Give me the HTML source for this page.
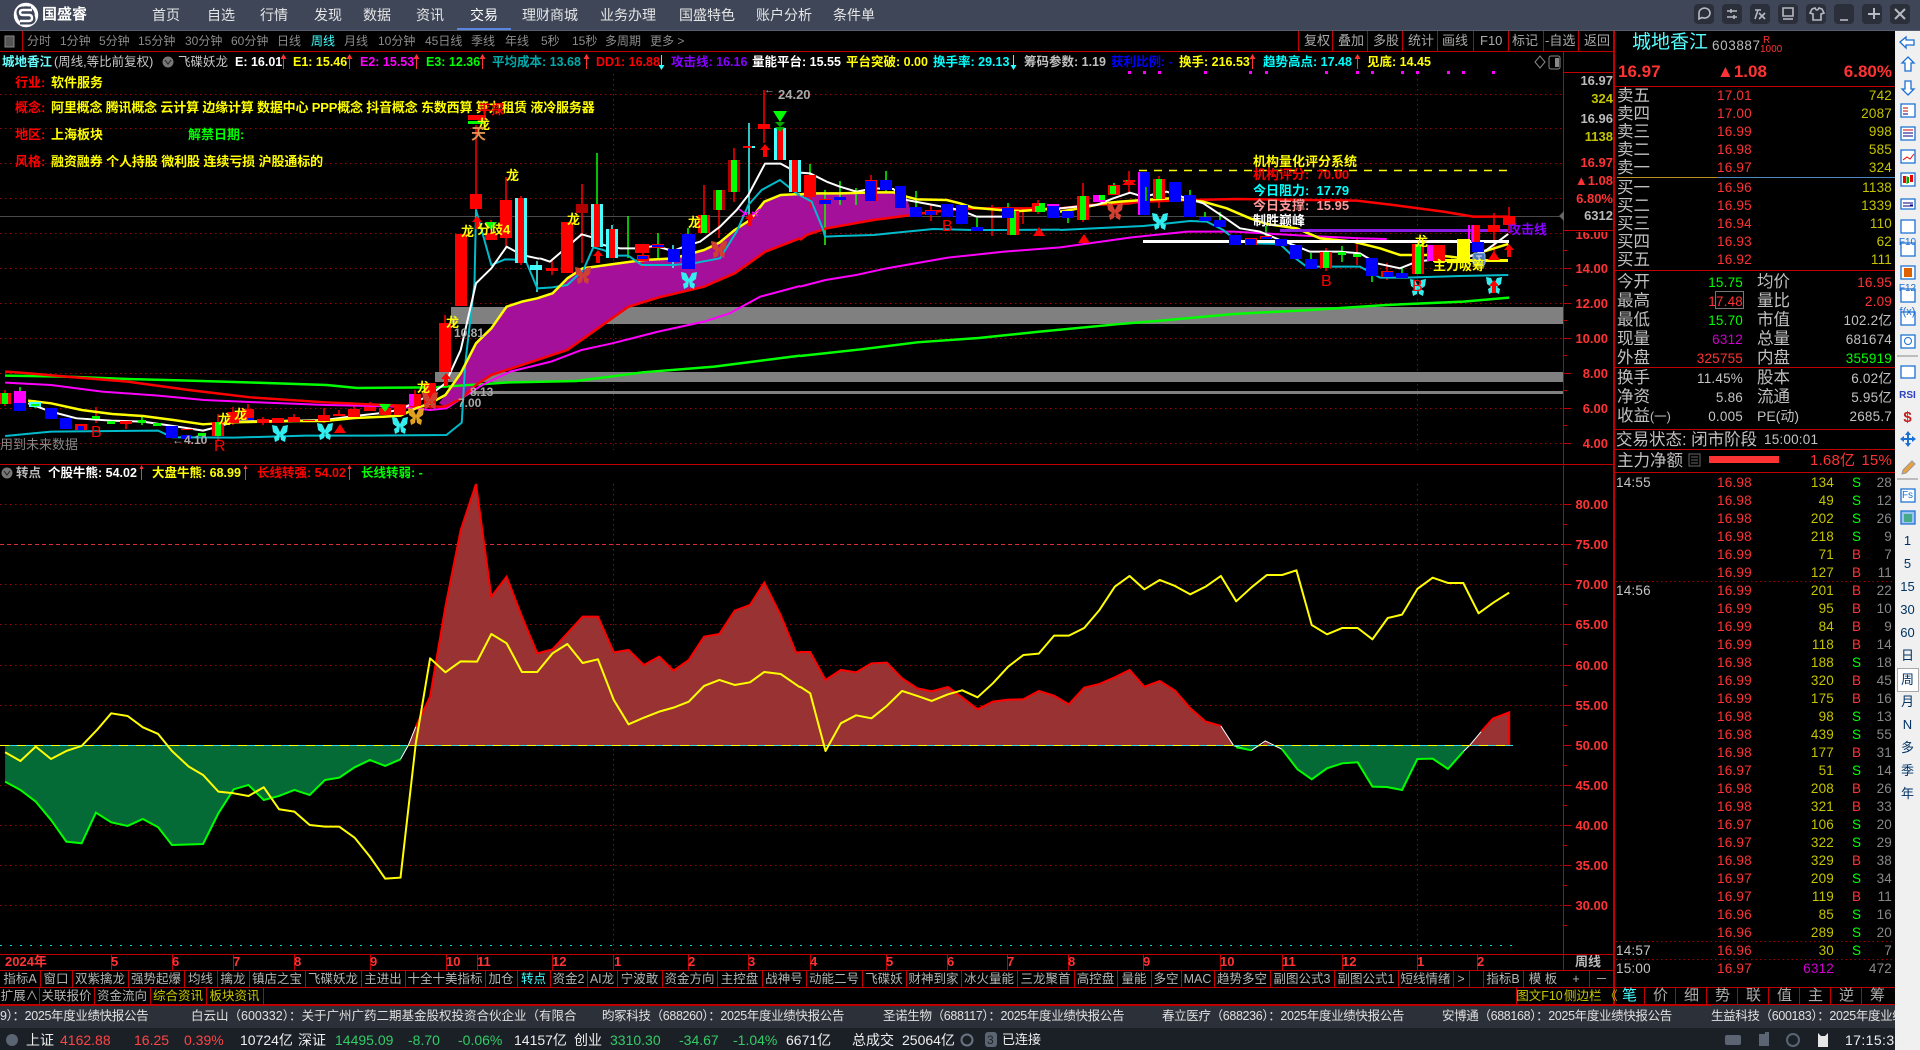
<!DOCTYPE html>
<html lang="zh"><head><meta charset="utf-8"><title>国盛睿</title>
<style>
html,body{margin:0;padding:0;background:#000;width:1920px;height:1050px;overflow:hidden}
body{position:relative;font-family:"Liberation Sans","Noto Sans CJK SC",sans-serif;font-size:13px;color:#bbb}
span{position:absolute;white-space:nowrap;line-height:20px}
svg{position:absolute;left:0;top:0}
svg *{vector-effect:non-scaling-stroke}
.bar{position:absolute;left:0;width:100%}
.b{font-weight:bold}
.nav{font-size:14px;color:#e6e6e6;top:5px}
.tb{font-size:12px;color:#8c8c8c;top:31px}
.tr{font-size:13px;color:#aaa;top:31px;text-align:center}
.in{top:52px;font-size:12.5px;font-weight:bold}
.n{top:0}
.ax{right:312px;font-size:13px;font-weight:bold;color:#f33;margin-top:1px}
.ar{right:307px;font-size:13px;font-weight:bold}
.dt{top:952px;font-size:13px;font-weight:bold;color:#f33}
.bt{top:969px;font-size:12.5px;color:#b4b4b4;text-align:center}
.bu{top:986px;font-size:12.5px;color:#b4b4b4;text-align:center}
.tk{top:1006px;font-size:12.5px;color:#e0e0e0;letter-spacing:-.35px}
.st{top:1030px;font-size:14px;color:#eee}
.col{position:absolute;white-space:nowrap}
.tab{top:986px;font-size:15px;color:#aaa;text-align:center;width:31px}
.sd{left:1895px;width:25px;text-align:center;color:#036;font-size:13px}
.pn{font-size:16.5px;color:#c0c0c0}
.pn small{font-size:12.5px}
.pv{font-size:13.5px;letter-spacing:.2px}
.r{color:#f33}.y{color:#c4c400}.g{color:#0f0}.w{color:#c4c4c4}
</style></head><body>

<div class="bar" style="top:0;height:30px;background:#3e4658"></div>
<div class="bar" style="top:30px;height:1px;background:#555d6e"></div>
<div class="bar" style="top:1005px;height:23px;background:#2c3039;width:1895px"></div>
<div class="bar" style="top:1028px;height:22px;background:#1b2027;width:1895px"></div>
<div style="position:absolute;left:1895px;top:31px;width:25px;height:1019px;background:#f0f0f0"></div>
<div style="position:absolute;left:1897px;top:668px;width:22px;height:24px;background:#fff;border:1px solid #aaa;box-sizing:border-box"></div>

<svg width="1920" height="1050" viewBox="0 0 1920 1050" fill="none">
<defs><path id="bf" d="M0-2L-3-8-8-9-7-2-3 1-6 3-5 8-1 6 0 0 1 6 5 8 6 3 3 1 7-2 8-9 3-8Z"/></defs>
<!-- logo -->
<circle cx="26" cy="15" r="10.5" stroke="#fff" stroke-width="3.5"/>
<path d="M31 9H23Q19 9 19 12.5T23 16H29Q33 16 33 19T29 22H20" stroke="#3e4658" stroke-width="5"/>
<path d="M32 10H23Q20 10 20 12.5T23 15H29Q32 15 32 18T29 21H20" stroke="#fff" stroke-width="2.4"/>
<rect x="457" y="28" width="54" height="2" fill="#5a86e0"/>
<!-- window buttons -->
<g fill="#2a2f3a"><rect x="1694" y="4" width="20" height="20" rx="4"/><rect x="1722" y="4" width="20" height="20" rx="4"/><rect x="1750" y="4" width="20" height="20" rx="4"/><rect x="1778" y="4" width="20" height="20" rx="4"/><rect x="1806" y="4" width="20" height="20" rx="4"/><rect x="1834" y="4" width="20" height="20" rx="4"/><rect x="1862" y="4" width="20" height="20" rx="4"/><rect x="1890" y="4" width="20" height="20" rx="4"/></g>
<g stroke="#b6bac2" stroke-width="1.6">
<path d="M1699 13a5.5 5 0 1 1 3 4.5l-3 1.500z"/>
<path d="M1727 11h10M1727 17h10"/><path d="M1731 9v4M1734 15v4"/>
<path d="M1755 10h6M1758 10l-3 9M1759 13l6 6M1765 13l-6 6"/>
<rect x="1783" y="8" width="10" height="8"/><path d="M1783 19h10"/>
<path d="M1812 9l3-1q1 2 2 2t2-2l3 1 2 4-3 1v6h-8v-6l-3-1z"/>
<path d="M1840 20h8"/><path d="M1868 14h12M1874 8v6M1874 14v5" stroke-width="2"/>
<path d="M1895 9l10 10M1905 9l-10 10" stroke-width="2"/>
</g>

<!-- structure lines -->
<g fill="#c00000">
<rect x="0" y="51" width="1614" height="1"/><rect x="22" y="31" width="1" height="20"/>
<rect x="1563" y="51" width="1" height="919"/><rect x="1563" y="72" width="51" height="1"/>
<rect x="1563" y="230" width="51" height="1"/>
<rect x="1613" y="31" width="2" height="974"/>
<rect x="0" y="464" width="1614" height="1"/>
<rect x="0" y="954" width="1614" height="1"/><rect x="0" y="970" width="1614" height="1"/><rect x="0" y="987" width="1895" height="1"/>
<rect x="0" y="1004" width="1895" height="2"/>
<rect x="1614" y="86" width="281" height="1"/><rect x="1614" y="270" width="281" height="1"/><rect x="1614" y="367" width="281" height="1"/><rect x="1614" y="429" width="281" height="1"/><rect x="1614" y="449" width="281" height="1"/><rect x="1614" y="472" width="281" height="1"/>
<path d="M1298 31h1v20h-1zM1332 31h1v20h-1zM1367 31h1v20h-1zM1402 31h1v20h-1zM1437 31h1v20h-1zM1473 31h1v20h-1zM1508 31h1v20h-1zM1543 31h1v20h-1zM1578 31h1v20h-1z"/>
<path d="M40 970h1v17h-1zM72 970h1v17h-1zM128 970h1v17h-1zM184 970h1v17h-1zM217 970h1v17h-1zM249 970h1v17h-1zM305 970h1v17h-1zM361 970h1v17h-1zM405 970h1v17h-1zM485 970h1v17h-1zM517 970h1v17h-1zM550 970h1v17h-1zM587 970h1v17h-1zM617 970h1v17h-1zM662 970h1v17h-1zM717 970h1v17h-1zM762 970h1v17h-1zM806 970h1v17h-1zM862 970h1v17h-1zM906 970h1v17h-1zM961 970h1v17h-1zM1017 970h1v17h-1zM1074 970h1v17h-1zM1117 970h1v17h-1zM1151 970h1v17h-1zM1181 970h1v17h-1zM1214 970h1v17h-1zM1270 970h1v17h-1zM1334 970h1v17h-1zM1398 970h1v17h-1zM1453 970h1v17h-1zM1469 970h1v17h-1zM1483 970h1v17h-1zM1523 970h1v17h-1zM1589 970h1v17h-1z"/>
<path d="M39 987h1v17h-1zM94 987h1v17h-1zM150 987h1v17h-1zM206 987h1v17h-1zM263 987h1v17h-1zM1516 987h1v17h-1z"/>
<path d="M1644 987h1v18h-1zM1675 987h1v18h-1zM1706 987h1v18h-1zM1737 987h1v18h-1zM1768 987h1v18h-1zM1799 987h1v18h-1zM1830 987h1v18h-1zM1861 987h1v18h-1z"/>
<path d="M111 955h1v15h-1zM172 955h1v15h-1zM233 955h1v15h-1zM294 955h1v15h-1zM370 955h1v15h-1zM446 955h1v15h-1zM477 955h1v15h-1zM552 955h1v15h-1zM613 955h1v15h-1zM688 955h1v15h-1zM748 955h1v15h-1zM810 955h1v15h-1zM886 955h1v15h-1zM947 955h1v15h-1zM1007 955h1v15h-1zM1068 955h1v15h-1zM1143 955h1v15h-1zM1220 955h1v15h-1zM1282 955h1v15h-1zM1342 955h1v15h-1zM1417 955h1v15h-1zM1477 955h1v15h-1z"/>
</g>
<!-- axis ticks -->
<path stroke="#c00000" d="M1563 268.500h8M1563 303.500h8M1563 338.500h8M1563 373.500h8M1563 408.500h8M1563 443.500h8M1563 250.500h4M1563 285.500h4M1563 320.500h4M1563 355.500h4M1563 390.500h4M1563 425.500h4M1563 504.500h8M1563 544.500h8M1563 584.500h8M1563 624.500h8M1563 665.500h8M1563 705.500h8M1563 745.500h8M1563 785.500h8M1563 825.500h8M1563 865.500h8M1563 905.500h8M1563 524.500h4M1563 564.500h4M1563 604.500h4M1563 644.500h4M1563 685.500h4M1563 725.500h4M1563 765.500h4M1563 805.500h4M1563 845.500h4M1563 885.500h4M1563 925.500h4"/>

<!-- grid -->
<g stroke="#a00000" stroke-dasharray="1.500 3.500">
<path d="M0 94.500H1563M0 128.500H1563M0 163.500H1563M0 198.500H1563M0 233.500H1563M0 268.500H1563M0 303.500H1563M0 338.500H1563M0 373.500H1563M0 408.500H1563M0 443.500H1563"/>
<path d="M0 504.500H1563M0 584.500H1563M0 624.500H1563M0 665.500H1563M0 705.500H1563M0 785.500H1563M0 825.500H1563M0 865.500H1563M0 905.500H1563"/>
<path d="M613.500 74V450M1417.500 74V450M613.500 484V954M1417.500 484V954"/>
</g>
<path d="M0 544.500H1563" stroke="#d83030" stroke-dasharray="4 3"/>
<path d="M0 945.500H1513" stroke="#0dd" stroke-dasharray="2 8"/>
<path d="M0 216.500H1563" stroke="#4a4a4a"/>
<!-- magenta dots -->
<path fill="#f0f" d="M1128 71h3v3h-3zM1143 71h3v3h-3zM1158 71h3v3h-3zM1204 71h3v3h-3zM1249 71h3v3h-3zM1265 71h3v3h-3zM1325 71h3v3h-3zM1356 71h3v3h-3zM1371 71h3v3h-3zM1401 71h3v3h-3zM1416 71h3v3h-3zM1447 71h3v3h-3zM1462 71h3v3h-3zM1492 71h3v3h-3z"/>

<!-- gray bands -->
<g fill="#808080"><rect x="451" y="307" width="1112" height="17"/><rect x="435" y="372" width="1128" height="10"/><rect x="450" y="391" width="1113" height="3"/></g>

<!-- purple fill -->
<g transform="translate(0 190) scale(.5102 .3333)"><polygon fill="#a5109a" points="860,640 873,615 903,550 933,460 963,415 993,350 1023,335 1053,325 1083,310 1112,265 1142,235 1203,222 1262,210 1320,205 1380,180 1410,158 1440,120 1470,90 1498,35 1530,15 1568,12 1568,145 1500,185 1440,250 1380,290 1292,322 1232,350 1172,415 1112,480 1053,510 963,555 933,585 905,625 873,650"/></g>
<g transform="translate(540 85) scale(.3333)"><polygon fill="#a5109a" points="780,328 900,325 1000,322 1060,322 1100,335 1115,390 1000,405 860,430 800,450 780,465"/></g>

<!-- wicks -->
<path stroke="#f00" stroke-width="1.500" d="M5 390V406M96 407V423M126 420V429M218 414V440M233 407V425M248 404V409M263 417V425M294 414V417M324 408V423M339 410V416M354 405V409M370 402V407M415 390V396M430 384V388M445 315V372M476 125V220M491 220V233M506 177V247M521 196V265M552 260V275M582 184V263M704 185V233M719 210V238M734 148V202M764 90V143M810 197V208M825 204V245M871 175V180M931 205V221M992 205V236M1023 210V224M1038 200V214M1083 183V222M1129 171V193M1159 176V208M1326 248V271M1357 237V265M1387 263V280M1494 213V253M1509 207V233M643 245V268"/>
<path stroke="#0f0" stroke-width="1.500" d="M20 387V391M35 400V408M142 417V425M597 153V204M628 216V258M658 233V258M810 164V175M825 190V245M840 181V205M856 188V205M886 171V192M916 191V207M977 218V227M1008 203V222M1114 183V190M1190 190V196M1205 212V217M1220 212V220M1266 226V237M1311 253V259M1342 246V262M1372 276V282M1402 268V273M1068 218V223M688 228V234"/>
<path stroke="#4ff" stroke-width="1.500" d="M537 261V292M749 123V218M612 225V229M673 245V268"/>

<!-- moving lines -->
<g transform="translate(0 190) scale(.5102 .3333)" fill="none" stroke-linejoin="round">
<polyline stroke="#0f0" stroke-width="2.500" points="10,557 130,560 250,567 370,572 500,578 640,585 700,594 850,592 1000,577 1130,573 1260,547 1400,530 1568,497"/>
<polyline stroke="#f0f" stroke-width="2" points="10,578 100,585 200,605 310,617 400,630 520,638 640,645 780,650 843,660 875,655 905,625 945,585 1000,545 1080,515 1140,480 1200,460 1290,425 1380,395 1430,370 1490,320 1568,288"/>
<polyline stroke="#f00" stroke-width="2.500" points="10,545 40,548 130,560 250,575 370,600 490,622 637,637 755,645 843,650 873,650 905,625 933,585 963,555 1053,510 1112,480 1172,415 1232,350 1292,322 1380,290 1440,250 1500,185 1568,145"/>
<polyline stroke="#0bc" stroke-width="2" points="10,738 100,725 310,722 338,742 458,743 600,737 725,737 875,735 905,698 912,520 930,280 933,60 963,225 990,208 1030,210 1053,295 1083,292 1112,285 1142,242"/>
<polyline stroke="#fff" stroke-width="2" points="55,640 100,665 150,685 218,692 280,695 340,708 398,722 428,710 458,695 517,693 577,692 637,690 695,678 755,668 785,658 843,615 873,580 903,480 933,280 963,235 993,170 1023,195 1053,205 1058,206"/>
<polyline stroke="#ff0" stroke-width="2.500" points="55,632 100,640 160,660 220,672 280,678 340,690 398,703 428,700 458,697 517,695 577,693 637,693 695,684 755,680 785,677 815,655 843,640 873,615 903,550 933,460 963,415 993,350 1023,335 1053,325 1083,310 1112,265 1142,235 1203,222 1262,210 1320,205 1380,180 1410,158 1440,120 1470,90 1498,35 1530,15 1568,12"/>
</g>
<g transform="translate(540 85) scale(.3333)" fill="none" stroke-linejoin="round">
<polyline stroke="#f00" stroke-width="2.500" points="780,465 800,450 860,430 1000,405 1115,390 1180,380 1300,370 1560,370"/>
<polyline stroke="#0bc" stroke-width="2" points="130,555 160,487 190,495 230,512 265,512 305,540 400,540 460,535 540,520 565,480 590,440 625,360 665,315 720,285 770,325 815,350 848,430 855,455 900,453 1000,450 1100,440 1180,432 1300,435 1400,435 1560,434"/>
<polyline stroke="#fff" stroke-width="2" points="0,520 30,530 65,500 125,448 160,458 190,480 240,490 290,490 345,483 400,498 445,480 480,470 540,425 590,375 625,330 675,236 722,236 770,262 810,265 860,290 900,305 950,320 1000,310 1060,312 1100,345 1180,360 1260,375 1310,395 1390,395 1440,378 1530,372 1560,370"/>
<polyline stroke="#ff0" stroke-width="2.500" points="780,328 810,325 900,325 1000,322 1060,322 1100,335 1130,343 1220,345 1260,355 1300,368 1380,375 1440,378 1530,372 1560,372"/>
</g>
<g transform="translate(800 140) scale(.5102 .3333)" fill="none">
<polyline stroke="#0f0" stroke-width="2.500" points="0,648 120,628 230,607 350,594 470,575 620,553 700,543 850,522 1000,510 1150,495 1300,485 1390,473"/>
<polyline stroke="#f0f" stroke-width="2" points="0,440 50,420 110,405 170,385 290,353 400,335 510,322 650,292 760,275 850,275 1000,288 1100,295 1150,297"/>
</g>
<g transform="translate(1060 150) scale(.3333)" fill="none" stroke-linejoin="round">
<polyline stroke="#f00" stroke-width="2.500" points="0,175 90,165 210,160 240,155 400,150 530,147 890,152 1000,165 1150,185 1240,200 1345,200"/>
<polyline stroke="#0bc" stroke-width="2" points="0,240 100,235 250,228 390,213 440,215 490,240 520,265 570,280 660,282 700,320 740,350 900,350 960,383 1040,383 1200,378 1345,375"/>
<polyline stroke="#ff0" stroke-width="2.500" points="0,185 60,175 130,160 180,155 250,150 330,145 430,155 500,175 570,205 620,222 710,235 780,265 880,275 960,295 1020,315 1120,315 1170,320 1210,325 1270,305 1345,282"/>
<polyline stroke="#fff" stroke-width="2" points="0,175 50,170 110,165 160,145 210,128 250,140 320,125 380,145 430,160 490,200 540,235 600,245 660,270 700,285 750,305 840,305 900,310 950,340 1020,355 1070,335 1110,330 1200,330 1280,300 1345,252"/>
</g>
<rect x="1280" y="229" width="228" height="3" fill="#8a1ee6"/>
<rect x="1143" y="240" width="366" height="3" fill="#fff"/>
<rect x="1433" y="259" width="75" height="3" fill="#ff0"/>
<path d="M1139 170.500H1513" stroke="#ff0" stroke-dasharray="8 7" stroke-width="1.500"/>

<!-- candles: outer layers -->
<path fill="#f00" d="M-1 393h12v11h-12zM227 412h12v11h-12zM242 409h12v11h-12zM257 419h12v4h-12zM272 418h12v5h-12zM288 417h12v5h-12zM303 420h12v1h-12zM318 415h12v6h-12zM333 414h12v2h-12zM348 409h12v8h-12zM364 407h12v4h-12zM379 408h12v7h-12zM394 405h12v10h-12zM409 394h12v12h-12zM424 383h12v21h-12zM439 323h12v49h-12zM455 234h12v72h-12zM470 194h12v15h-12zM485 233h12v7h-12zM500 200h12v38h-12zM546 268h12v3h-12zM561 222h12v51h-12zM576 204h12v9h-12zM635 244h14v9h-14zM698 215h12v18h-12zM713 190h12v20h-12zM728 160h12v32h-12zM743 146h12v2h-12zM758 124h12v5h-12zM804 175h12v22h-12zM1007 211h12v24h-12zM1032 203h12v9h-12zM1077 196h12v24h-12zM1108 185h12v10h-12zM1123 180h12v2h-12zM1153 179h12v20h-12zM1320 252h12v16h-12zM1412 244h12v30h-12zM1433 245h12v16h-12zM1488 225h12v7h-12zM1503 216h12v9h-12zM1442 248h2v7h-2zM212 422h12v14h-12zM75 424h12v6h-12zM181 429h12v1h-12zM120 421h12v3h-12zM637 255h12v6h-12zM1381 271h12v6h-12zM1245 238h12v7h-12zM925 210h12v5h-12zM819 199h12v5h-12zM652 244h12v4h-12zM865 180h12v21h-12zM1260 236h12v3h-12z"/>
<path fill="#b00000" d="M576 204h12v9h-12zM713 190h12v20h-12zM728 160h12v32h-12z"/>
<path fill="#4ff" d="M515 198h12v65h-12zM29 402h12v5h-12zM591 204h12v43h-12zM606 229h12v29h-12zM774 128h12v32h-12zM789 160h12v32h-12zM530 265h12v5h-12zM743 146h12v2h-3v-2z"/>
<path fill="#f0f" d="M14 391h12v12h-12zM409 394h5v12h-5zM1093 195h12v7h-12zM1468 225h2v17h-2zM1427 245h6v16h-6zM1047 204h12v14h-12zM1138 172h12v43h-12z"/>
<!-- inner -->
<path fill="#f00" d="M518 198h6v65h-6zM594 204h6v43h-6zM609 229h6v29h-6zM777 128h6v32h-6zM792 160h6v32h-6zM1471 225h9v17h-9z"/>
<path fill="#f0f" d="M1472 225h2v17h-2z"/>
<path fill="#0f0" d="M2 393h6v11h-6zM215 422h6v14h-6zM701 215h6v18h-6zM716 190h6v20h-6zM731 160h6v32h-6zM1010 211h6v24h-6zM1035 206h6v6h-6zM1080 196h6v24h-6zM1156 179h6v20h-6zM1323 252h6v16h-6zM1415 244h6v30h-6zM1110 186h6v8h-6zM1126 180h4v2h-4zM92 416h8v3h-8zM107 421h8v3h-8zM138 420h8v3h-8zM153 423h8v3h-8zM198 433h8v3h-8zM31 404h8v2h-8zM1338 252h8v3h-8zM1353 254h8v3h-8zM1099 195h6v5h-6zM1039 203h6v9h-6z"/>
<path fill="#00f" d="M14 403h12v8h-12zM45 408h12v11h-12zM60 418h12v11h-12zM78 426h6v4h-6zM166 426h12v12h-12zM181 435h10v4h-10zM248 418h6v2h-6zM682 234h13v35h-13zM668 249h12v13h-12zM652 245h12v2h-12zM638 256h10v3h-10zM819 200h12v4h-12zM834 197h12v3h-12zM865 181h11v20h-11zM880 180h12v10h-12zM895 186h11v22h-11zM910 207h12v10h-12zM926 211h10v4h-10zM941 204h12v13h-12zM956 205h12v19h-12zM971 227h12v4h-12zM1002 208h12v10h-12zM1047 206h12v12h-12zM1062 211h12v7h-12zM1140 172h10v43h-10zM1169 182h12v20h-12zM1184 195h12v22h-12zM1199 217h12v4h-12zM1214 220h12v7h-12zM1229 235h12v10h-12zM1246 239h10v6h-10zM1261 237h10v2h-10zM1275 239h12v7h-12zM1290 245h12v14h-12zM1305 259h12v10h-12zM1366 258h12v18h-12zM1383 272h10v5h-10zM1396 273h12v5h-12zM1472 242h12v10h-12z"/>
<path fill="#ff0" d="M1457 239h13v24h-13z"/>
<path fill="#0a0" d="M1145 187h2v14h-2z"/>
<rect x="1473" y="253" width="12" height="12" rx="2" fill="#4a78c0" stroke="#9cb8e8"/><path d="M1476 256h6M1479 256v6" stroke="#dde"/>

<!-- triangles -->
<path fill="#f00" d="M334 433l6-9 6 9zM1033 236l6-9 6 9zM1078 243l6-9 6 9zM1488 260l6-9 6 9zM1122 185l7-6 7 6z"/>
<!-- butterflies -->
<g fill="#3ee"><use href="#bf" x="280" y="434"/><use href="#bf" x="325" y="432"/><use href="#bf" x="400" y="426"/><use href="#bf" x="689" y="281"/><use href="#bf" x="1160" y="222"/><use href="#bf" x="1418" y="288"/><use href="#bf" x="1494" y="286"/></g>
<use href="#bf" x="416" y="417" fill="#e0a020"/>
<g fill="#d04030"><use href="#bf" x="430" y="401"/><use href="#bf" x="583" y="276"/><use href="#bf" x="719" y="250"/><use href="#bf" x="1115" y="212"/></g>
<path fill="#f00" d="M598 250l-5 6h3v7h4v-7h3zM765 144l-5 6h3v7h4v-7h3zM750 213l-5 6h3v7h4v-7h3zM446 373l-5 6h3v7h4v-7h3zM477 216l-5 6h3v7h4v-7h3zM1509 244l-5 6h3v7h4v-7h3zM1494 280l-5 6h3v7h4v-7h3z"/>
<path fill="#0f0" d="M773 111h14l-7 11zM379 404h12l-6 8zM485 222h12l-6 8z"/>
<path fill="#0a0" d="M775 122h10l-5 5zM775 127h10l-5 5z"/>
<path stroke="#f0f" stroke-width="1.500" d="M739 209l8 6M760 209l-8 6M742 216l6-4M758 216l-6-4"/>
<path fill="#f00" d="M468 115h18v5h-18z"/><path fill="#0f0" d="M468 121h18v3h-18z"/>

<!-- info arrows -->
<g stroke-width="1">
<path stroke="#f33" d="M283.500 57V69M349.500 57V69M416.500 57V69M482.500 57V69M586.500 57V69M1252.500 57V69M1357.500 57V69M141.500 467V480M245.500 467V480M349.500 467V480"/>
<path stroke="#3ff" d="M661.500 55V67M1013.500 55V67"/>
</g>
<path fill="#f33" d="M283.500 54l-3 5h6zM349.500 54l-3 5h6zM416.500 54l-3 5h6zM482.500 54l-3 5h6zM586.500 54l-3 5h6zM1252.500 54l-3 5h6zM1357.500 54l-3 5h6zM141.500 465l-2 4h4zM245.500 465l-2 4h4zM349.500 465l-2 4h4z"/>
<path fill="#3ff" d="M661.500 70l-3-5h6zM1013.500 70l-3-5h6z"/>
<circle cx="168" cy="62" r="5.500" fill="#777"/><path d="M165 60l3 4 3-4" stroke="#222"/>
<circle cx="7" cy="473" r="5.500" fill="#777"/><path d="M4 471l3 4 3-4" stroke="#222"/>
<rect x="5" y="36" width="9" height="11" fill="#555" stroke="#888"/>
<path d="M1535 62l5-6 5 6-5 6z" stroke="#888"/><rect x="1549" y="56" width="11" height="13" rx="2" stroke="#888"/><rect x="1555" y="58" width="4" height="9" fill="#888"/>

<!-- lower chart -->
<g transform="translate(0 460) scale(.5102 .3333)">
<polygon fill="#046a36" points="10,857 10,965 40,990 70,1025 100,1080 130,1145 160,1150 188,1058 218,1087 250,1098 280,1077 310,1102 337,1155 398,1152 428,1060 458,988 487,975 517,1020 547,1008 577,990 607,1005 637,960 665,953 695,922 725,900 755,918 785,898 800,857"/>
<polygon fill="#993333" points="800,857 815,800 843,710 873,440 903,210 933,72 963,410 993,350 1023,470 1053,580 1083,568 1112,520 1142,470 1172,470 1203,577 1232,570 1262,615 1292,590 1320,632 1350,600 1380,530 1410,522 1440,452 1470,435 1498,368 1530,465 1560,577 1568,577 1568,857"/>
<polyline fill="none" stroke="#0f0" stroke-width="2" points="10,965 40,990 70,1025 100,1080 130,1145 160,1150 188,1058 218,1087 250,1098 280,1077 310,1102 337,1155 398,1152 428,1060 458,988 487,975 517,1020 547,1008 577,990 607,1005 637,960 665,953 695,922 725,900 755,918 785,898"/>
<polyline fill="none" stroke="#fff" points="785,898 800,857 815,800"/>
<polyline fill="none" stroke="#f00" stroke-width="2" points="815,800 843,710 873,440 903,210 933,72 963,410 993,350 1023,470 1053,580 1083,568 1112,520 1142,470 1172,470 1203,577 1232,570 1262,615 1292,590 1320,632 1350,600 1380,530 1410,522 1440,452 1470,435 1498,368 1530,465 1560,577 1568,577"/>
</g>
<g transform="translate(800 460) scale(.5102 .3333)">
<polygon fill="#993333" points="0,857 0,576 20,576 50,660 80,630 110,637 140,610 170,608 200,655 230,685 258,694 290,681 320,715 348,748 378,725 408,719 438,718 468,693 498,707 527,733 557,683 587,672 617,652 646,630 675,680 705,663 735,692 765,745 795,785 825,798 850,857"/>
<polygon fill="#046a36" points="850,857 855,862 885,871 905,857"/>
<polygon fill="#993333" points="905,857 912,843 925,857"/>
<polygon fill="#046a36" points="925,857 945,868 975,928 1003,958 1033,925 1063,910 1093,907 1122,980 1150,981 1180,990 1210,897 1240,896 1270,927 1300,875 1312,857"/>
<polygon fill="#993333" points="1312,857 1335,815 1358,776 1390,757 1390,857"/>
<polyline fill="none" stroke="#f00" stroke-width="2" points="0,576 20,576 50,660 80,630 110,637 140,610 170,608 200,655 230,685 258,694 290,681 320,715 348,748 378,725 408,719 438,718 468,693 498,707 527,733 557,683 587,672 617,652 646,630 675,680 705,663 735,692 765,745 795,785 825,798"/>
<polyline fill="none" stroke="#fff" points="825,798 850,857 885,871 912,843 945,868"/>
<polyline fill="none" stroke="#0f0" stroke-width="2" points="855,862 885,871"/>
<polyline fill="none" stroke="#0f0" stroke-width="2" points="945,868 975,928 1003,958 1033,925 1063,910 1093,907 1122,980 1150,981 1180,990 1210,897 1240,896 1270,927 1300,875"/>
<polyline fill="none" stroke="#fff" points="1300,875 1312,857 1335,815"/>
<polyline fill="none" stroke="#f00" stroke-width="2" points="1335,815 1358,776 1390,757 1390,857"/>
</g>
<path d="M0 745.500H1513" stroke="#3dd"/>
<path d="M0 745.500H1513" stroke="#ff0" stroke-dasharray="9 8"/>
<g transform="translate(0 460) scale(.5102 .3333)"><polyline fill="none" stroke="#ff0" stroke-width="2" stroke-linejoin="round" points="10,877 40,903 70,860 100,897 130,873 160,858 190,810 218,760 250,768 280,802 310,822 337,873 370,920 398,945 428,995 458,1000 487,1008 517,982 547,1048 577,1055 607,1095 637,1100 665,1100 695,1133 725,1190 755,1256 785,1253 815,850 843,595 873,637 903,604 935,605 963,522 993,550 1023,636 1053,636 1083,580 1112,552 1142,609 1172,598 1203,720 1232,793 1262,773 1292,755 1320,743 1350,725 1380,678 1410,660 1440,675 1470,667 1498,636 1530,642 1568,682"/></g>
<g transform="translate(800 460) scale(.5102 .3333)"><polyline fill="none" stroke="#ff0" stroke-width="2" stroke-linejoin="round" points="0,680 20,700 50,873 80,790 110,766 140,775 170,738 200,693 230,708 258,723 290,703 318,691 348,712 378,670 408,620 438,585 468,581 498,527 527,527 557,504 587,450 617,380 646,348 675,388 705,360 735,378 765,403 795,380 825,348 855,424 885,382 915,345 945,345 973,331 1003,495 1033,523 1063,504 1093,504 1122,538 1152,474 1180,464 1210,387 1240,353 1270,369 1300,369 1330,460 1360,427 1390,398"/></g>

<!-- panel lines -->
<rect x="1617" y="177" width="100" height="1" fill="#c09020"/><rect x="1717" y="177" width="178" height="1" fill="#4a8ac0"/>
<rect x="1715.500" y="291.500" width="28" height="17" stroke="#777"/>
<rect x="1709" y="456" width="70" height="7" fill="#f33"/>
<rect x="1689" y="454" width="11" height="12" stroke="#666"/><path d="M1691 457h7M1691 460h7M1691 463h7" stroke="#666"/>
<path d="M1616 581.500H1892M1616 941.500H1892M1616 959.500H1892" stroke="#a00000" stroke-dasharray="1.500 3"/>
<path fill="#666" d="M1559 216l5-5v10z"/>

<!-- sidebar icons -->
<g stroke="#1a6fd4" stroke-width="1.300" fill="#fff">
<path d="M1900 42l6-5v3h8v5h-8v3z"/><path d="M1908 57l6 6h-3v8h-6v-8h-3z"/><path d="M1908 95l6-6h-3v-8h-6v8h-3z"/>
<rect x="1901" y="104" width="14" height="13"/><rect x="1901" y="127" width="14" height="13"/><rect x="1901" y="150" width="14" height="13"/><rect x="1901" y="173" width="14" height="13"/>
<rect x="1901" y="199" width="14" height="10"/><rect x="1901" y="220" width="14" height="13"/><rect x="1901" y="243" width="14" height="13"/><rect x="1901" y="266" width="14" height="13"/><rect x="1901" y="289" width="14" height="13"/><rect x="1901" y="312" width="14" height="13"/><rect x="1901" y="335" width="14" height="13"/><rect x="1901" y="366" width="14" height="12"/><rect x="1901" y="489" width="14" height="13"/><rect x="1901" y="511" width="14" height="13" fill="#9cc4f0"/>
</g>
<path stroke="#c00" d="M1903 108h5M1903 111h5M1903 130h10"/><path stroke="#000080" d="M1903 133h10M1903 136h10M1903 114h5M1910 205h3M1903 203h10M1903 206h10"/>
<path stroke="#e00" fill="none" d="M1903 160l4-3 3 2 4-5"/><path stroke="#0a0" d="M1907 176v8"/><path fill="#e00" d="M1903 176h3v7h-3zM1910 175h3v7h-3z"/>
<path fill="#0a0" d="M1907 177h2v6h-2z"/><path fill="#e06000" d="M1904 268h8v9h-8z"/><path fill="#4a8" d="M1904 514h8v8h-8z"/>
<path stroke="#888" d="M1897 356h21M1897 479h21"/>
<circle cx="1908" cy="341" r="3.500" stroke="#1a6fd4" fill="none"/>
<path d="M1908 431l3 4h-2v3h3v-2l4 3-4 3v-2h-3v3h2l-3 4-3-4h2v-3h-3v2l-4-3 4-3v2h3v-3h-2z" fill="#1a6fd4"/>
<path d="M1903 470l9-9 3 3-9 9-4 1z" fill="#e8a040" stroke="#999"/>
<circle cx="12" cy="1040" r="6" fill="#5a6472"/><circle cx="967" cy="1040" r="5.500" stroke="#6a7482" stroke-width="2"/>
<rect x="985" y="1032" width="12" height="15" rx="3" fill="#5a6472"/>
<rect x="1725" y="1035" width="16" height="10" rx="2" fill="#5a6472"/><path fill="#5a6472" d="M1759 1034h6v12h-6zM1765 1032h4v14h-4z"/><circle cx="1793" cy="1040" r="6" stroke="#5a6472" stroke-width="2"/><path d="M1818 1033l3 3h4l3-3v14h-10z" fill="#e6e6e6"/>
</svg>

<!-- title -->
<span style="left:42px;top:5px;font-size:15px;font-weight:bold;color:#fff">国盛睿</span>
<span class="nav" style="left:152px">首页</span><span class="nav" style="left:207px">自选</span><span class="nav" style="left:260px">行情</span><span class="nav" style="left:314px">发现</span><span class="nav" style="left:363px">数据</span><span class="nav" style="left:416px">资讯</span><span class="nav" style="left:470px;color:#fff">交易</span><span class="nav" style="left:522px">理财商城</span><span class="nav" style="left:600px">业务办理</span><span class="nav" style="left:679px">国盛特色</span><span class="nav" style="left:756px">账户分析</span><span class="nav" style="left:833px">条件单</span>

<!-- toolbar -->
<span class="tb" style="left:27px">分时</span><span class="tb" style="left:60px">1分钟</span><span class="tb" style="left:99px">5分钟</span><span class="tb" style="left:138px">15分钟</span><span class="tb" style="left:185px">30分钟</span><span class="tb" style="left:231px">60分钟</span><span class="tb" style="left:277px">日线</span><span class="tb" style="left:311px;color:#4ff">周线</span><span class="tb" style="left:344px">月线</span><span class="tb" style="left:378px">10分钟</span><span class="tb" style="left:425px">45日线</span><span class="tb" style="left:471px">季线</span><span class="tb" style="left:505px">年线</span><span class="tb" style="left:541px">5秒</span><span class="tb" style="left:572px">15秒</span><span class="tb" style="left:605px">多周期</span><span class="tb" style="left:650px">更多 &gt;</span>
<span class="tr" style="left:1304px">复权</span><span class="tr" style="left:1338px">叠加</span><span class="tr" style="left:1373px">多股</span><span class="tr" style="left:1408px">统计</span><span class="tr" style="left:1442px">画线</span><span class="tr" style="left:1480px">F10</span><span class="tr" style="left:1512px">标记</span><span class="tr" style="left:1545px">-自选</span><span class="tr" style="left:1584px">返回</span>

<!-- info row -->
<span class="in" style="left:2px;color:#6ff">城地香江</span><span class="in" style="left:54px;color:#c8c8c8;font-weight:normal">(周线,等比前复权)</span><span class="in" style="left:178px;color:#c8c8c8;font-weight:normal">飞碟妖龙</span>
<span class="in" style="left:235px;color:#fff">E: 16.01</span><span class="in" style="left:293px;color:#ff0">E1: 15.46</span><span class="in" style="left:360px;color:#f0f">E2: 15.53</span><span class="in" style="left:426px;color:#0f0">E3: 12.36</span><span class="in" style="left:492px;color:#0aa">平均成本: 13.68</span><span class="in" style="left:596px;color:#f00">DD1: 16.88</span><span class="in" style="left:671px;color:#80f">攻击线: 16.16</span><span class="in" style="left:752px;color:#fff">量能平台: 15.55</span><span class="in" style="left:846px;color:#ff0">平台突破: 0.00</span><span class="in" style="left:933px;color:#0ff">换手率: 29.13</span><span class="in" style="left:1024px;color:#c0c0c0">筹码参数: 1.19</span><span class="in" style="left:1111px;color:#00f">获利比例: -</span><span class="in" style="left:1179px;color:#ff0">换手: 216.53</span><span class="in" style="left:1263px;color:#0ff">趋势高点: 17.48</span><span class="in" style="left:1367px;color:#ff0">见底: 14.45</span>

<!-- F10 text -->
<span class="b" style="left:15px;top:73px;color:#f00">行业:</span><span class="b" style="left:51px;top:73px;color:#ff0">软件服务</span>
<span class="b" style="left:15px;top:98px;color:#f00">概念:</span><span class="b" style="left:51px;top:98px;color:#ff0;letter-spacing:-.18px">阿里概念 腾讯概念 云计算 边缘计算 数据中心 PPP概念 抖音概念 东数西算 算力租赁 液冷服务器</span>
<span class="b" style="left:15px;top:125px;color:#f00">地区:</span><span class="b" style="left:51px;top:125px;color:#ff0">上海板块</span><span class="b" style="left:188px;top:125px;color:#0f0">解禁日期:</span>
<span class="b" style="left:15px;top:152px;color:#f00">风格:</span><span class="b" style="left:51px;top:152px;color:#ff0;letter-spacing:-.1px">融资融券 个人持股 微利股 连续亏损 沪股通标的</span>

<!-- chart marks -->
<span class="b" style="left:478px;top:100px;color:#f00;font-size:13px">平探</span><span class="b" style="left:477px;top:115px;color:#ff0">龙</span><span class="b" style="left:471px;top:125px;color:#e09050;font-size:15px">天</span>
<span class="b" style="left:506px;top:166px;color:#ff0">龙</span><span class="b" style="left:461px;top:222px;color:#ff0">龙</span><span class="b" style="left:477px;top:220px;color:#ff0">分歧4</span><span class="b" style="left:567px;top:210px;color:#ff0">龙</span><span class="b" style="left:688px;top:213px;color:#ff0">龙</span><span class="b" style="left:446px;top:313px;color:#ff0">龙</span><span class="b" style="left:417px;top:378px;color:#ff0">龙</span><span class="b" style="left:218px;top:410px;color:#ff0">龙</span><span class="b" style="left:234px;top:405px;color:#ff0">龙</span><span class="b" style="left:1415px;top:232px;color:#ff0">龙</span>
<span class="b" style="left:454px;top:323px;color:#aaa;font-size:12px">10.81</span><span class="b" style="left:470px;top:382px;color:#aaa;font-size:12px">8.13</span><span class="b" style="left:458px;top:393px;color:#aaa;font-size:12px">7.00</span><span class="b" style="left:172px;top:430px;color:#aaa;font-size:12px">←4.10</span>
<span style="left:0;top:435px;color:#888;font-size:13px">用到未来数据</span>
<span class="b" style="left:778px;top:85px;color:#aaa;font-size:13px">24.20</span><span style="left:764px;top:80px;color:#aaa;font-size:11px">←</span>
<span style="left:214px;top:437px;color:#f00;font-size:16px">R</span><span style="left:91px;top:423px;color:#f00;font-size:16px">B</span><span style="left:942px;top:217px;color:#f00;font-size:16px">B</span><span style="left:1321px;top:272px;color:#f00;font-size:16px">B</span><span style="left:1412px;top:277px;color:#f00;font-size:16px">B</span>
<span class="b" style="left:1508px;top:220px;color:#80f">攻击线</span><span class="b" style="left:1433px;top:256px;color:#ff0">主力吸筹</span><span class="b" style="left:1253px;top:211px;color:#fff">制胜巅峰</span>
<span class="b" style="left:1253px;top:152px;color:#ff0">机构量化评分系统</span><span class="b" style="left:1253px;top:165px;color:#f00">机构评分: &nbsp;70.00</span><span class="b" style="left:1253px;top:181px;color:#0ff">今日阻力: &nbsp;17.79</span><span class="b" style="left:1253px;top:196px;color:#f99">今日支撑: &nbsp;15.95</span>

<!-- axis labels -->
<span class="ar" style="top:71px;color:#bbb">16.97</span><span class="ar" style="top:89px;color:#c4c400">324</span><span class="ar" style="top:109px;color:#bbb">16.96</span><span class="ar" style="top:127px;color:#c4c400">1138</span><span class="ar" style="top:153px;color:#f33">16.97</span><span class="ar" style="top:171px;color:#f33">▲1.08</span><span class="ar" style="top:189px;color:#f33">6.80%</span><span class="ar" style="top:206px;color:#bbb">6312</span>
<span class="ax" style="top:224px;clip-path:inset(7px 0 0 0)">16.00</span><span class="ax" style="top:258px">14.00</span><span class="ax" style="top:293px">12.00</span><span class="ax" style="top:328px">10.00</span><span class="ax" style="top:363px">8.00</span><span class="ax" style="top:398px">6.00</span><span class="ax" style="top:433px">4.00</span>
<span class="ax" style="top:494px">80.00</span><span class="ax" style="top:534px">75.00</span><span class="ax" style="top:574px">70.00</span><span class="ax" style="top:614px">65.00</span><span class="ax" style="top:655px">60.00</span><span class="ax" style="top:695px">55.00</span><span class="ax" style="top:735px">50.00</span><span class="ax" style="top:775px">45.00</span><span class="ax" style="top:815px">40.00</span><span class="ax" style="top:855px">35.00</span><span class="ax" style="top:895px">30.00</span>

<!-- lower header -->
<span style="left:16px;top:463px;color:#bbb;font-weight:bold;font-size:12.5px">转点</span><span class="b" style="left:48px;top:463px;color:#fff;font-size:12.5px">个股牛熊: 54.02</span><span class="b" style="left:152px;top:463px;color:#ff0;font-size:12.5px">大盘牛熊: 68.99</span><span class="b" style="left:257px;top:463px;color:#f00;font-size:12.5px">长线转强: 54.02</span><span class="b" style="left:361px;top:463px;color:#0f0;font-size:12.5px">长线转弱: -</span>

<!-- dates -->
<span class="dt" style="left:5px">2024年</span><span class="dt" style="left:111px">5</span><span class="dt" style="left:172px">6</span><span class="dt" style="left:233px">7</span><span class="dt" style="left:294px">8</span><span class="dt" style="left:370px">9</span><span class="dt" style="left:446px">10</span><span class="dt" style="left:477px">11</span><span class="dt" style="left:552px">12</span><span class="dt" style="left:614px">1</span><span class="dt" style="left:688px">2</span><span class="dt" style="left:748px">3</span><span class="dt" style="left:810px">4</span><span class="dt" style="left:886px">5</span><span class="dt" style="left:947px">6</span><span class="dt" style="left:1007px">7</span><span class="dt" style="left:1068px">8</span><span class="dt" style="left:1143px">9</span><span class="dt" style="left:1220px">10</span><span class="dt" style="left:1282px">11</span><span class="dt" style="left:1342px">12</span><span class="dt" style="left:1417px">1</span><span class="dt" style="left:1477px">2</span>
<span class="b" style="left:1570px;top:952px;font-size:13px;color:#bbb;width:36px;text-align:center">周线</span>

<!-- button row -->
<span class="bt" style="left:0;width:40px">指标A</span><span class="bt" style="left:40px;width:32px">窗口</span><span class="bt" style="left:72px;width:56px">双紫擒龙</span><span class="bt" style="left:128px;width:56px">强势起爆</span><span class="bt" style="left:184px;width:33px">均线</span><span class="bt" style="left:217px;width:32px">擒龙</span><span class="bt" style="left:249px;width:56px">镇店之宝</span><span class="bt" style="left:305px;width:56px">飞碟妖龙</span><span class="bt" style="left:361px;width:44px">主进出</span><span class="bt" style="left:405px;width:80px">十全十美指标</span><span class="bt" style="left:485px;width:32px">加仓</span><span class="bt" style="left:517px;width:33px;color:#4ff">转点</span><span class="bt" style="left:550px;width:37px">资金2</span><span class="bt" style="left:587px;width:30px">AI龙</span><span class="bt" style="left:617px;width:45px">宁波敢</span><span class="bt" style="left:662px;width:55px">资金方向</span><span class="bt" style="left:717px;width:45px">主控盘</span><span class="bt" style="left:762px;width:44px">战神号</span><span class="bt" style="left:806px;width:56px">动能二号</span><span class="bt" style="left:862px;width:44px">飞碟妖</span><span class="bt" style="left:906px;width:55px">财神到家</span><span class="bt" style="left:961px;width:56px">冰火量能</span><span class="bt" style="left:1017px;width:57px">三龙聚首</span><span class="bt" style="left:1074px;width:43px">高控盘</span><span class="bt" style="left:1117px;width:34px">量能</span><span class="bt" style="left:1151px;width:30px">多空</span><span class="bt" style="left:1181px;width:33px">MAC</span><span class="bt" style="left:1214px;width:56px">趋势多空</span><span class="bt" style="left:1270px;width:64px">副图公式3</span><span class="bt" style="left:1334px;width:64px">副图公式1</span><span class="bt" style="left:1398px;width:55px">短线情绪</span><span class="bt" style="left:1453px;width:16px">&gt;</span><span class="bt" style="left:1483px;width:40px">指标B</span><span class="bt" style="left:1523px;width:40px">模 板</span><span class="bt" style="left:1563px;width:26px">+</span><span class="bt" style="left:1589px;width:25px">－</span>
<span class="bu" style="left:0;width:39px">扩展∧</span><span class="bu" style="left:39px;width:55px">关联报价</span><span class="bu" style="left:94px;width:56px">资金流向</span><span class="bu" style="left:150px;width:56px;color:#c8c800">综合资讯</span><span class="bu" style="left:206px;width:57px;color:#c8c800">板块资讯</span><span class="bu" style="left:1516px;width:47px;color:#c8c800">图文F10</span><span class="bu" style="left:1564px;width:50px;color:#c8c800">侧边栏 《</span>

<!-- ticker -->
<span class="tk" style="left:0">9）：2025年度业绩快报公告</span><span class="tk" style="left:191px;letter-spacing:0">白云山（600332）：关于广州广药二期基金股权投资合伙企业（有限合</span><span class="tk" style="left:602px">昀冢科技（688260）：2025年度业绩快报公告</span><span class="tk" style="left:883px">圣诺生物（688117）：2025年度业绩快报公告</span><span class="tk" style="left:1162px">春立医疗（688236）：2025年度业绩快报公告</span><span class="tk" style="left:1442px">安博通（688168）：2025年度业绩快报公告</span><div style="position:absolute;left:1711px;top:1005px;width:184px;height:23px;overflow:hidden;background:#2c3039"><span class="tk" style="left:0;top:1px">生益科技（600183）：2025年度业绩快报公告</span></div>

<!-- status -->
<span class="st" style="left:26px">上证</span><span class="st" style="left:60px;color:#f44">4162.88</span><span class="st" style="left:134px;color:#f44">16.25</span><span class="st" style="left:184px;color:#f44">0.39%</span><span class="st" style="left:240px">10724亿</span><span class="st" style="left:298px">深证</span><span class="st" style="left:335px;color:#3c6">14495.09</span><span class="st" style="left:408px;color:#3c6">-8.70</span><span class="st" style="left:458px;color:#3c6">-0.06%</span><span class="st" style="left:514px">14157亿</span><span class="st" style="left:574px">创业</span><span class="st" style="left:610px;color:#3c6">3310.30</span><span class="st" style="left:679px;color:#3c6">-34.67</span><span class="st" style="left:733px;color:#3c6">-1.04%</span><span class="st" style="left:786px">6671亿</span><span class="st" style="left:852px">总成交</span><span class="st" style="left:902px">25064亿</span><span class="st" style="left:987px;font-size:12px;color:#222">3</span><span class="st" style="left:1002px;font-size:13px">已连接</span><span class="st" style="left:1845px;letter-spacing:.4px">17:15:39</span>

<!-- panel head -->
<span style="left:1632px;top:33px;font-size:19px;color:#5ff">城地香江</span><span style="left:1712px;top:36px;font-size:13.5px;color:#bbb;letter-spacing:.6px">603887</span><span style="left:1763px;top:31px;font-size:10px;color:#f33">R</span><span style="left:1760px;top:40px;font-size:10px;color:#f33">1000</span>
<span class="b" style="left:1618px;top:62px;font-size:17px;color:#f33">16.97</span><span class="b" style="left:1717px;top:62px;font-size:17px;color:#f33">▲1.08</span><span class="b" style="right:28px;top:62px;font-size:17px;color:#f33">6.80%</span>

<div class="col pn" style="left:1617px;top:87px;line-height:18px">卖五<br>卖四<br>卖三<br>卖二<br>卖一</div>
<div class="col pv r" style="left:1717px;top:87px;line-height:18px">17.01<br>17.00<br>16.99<br>16.98<br>16.97</div>
<div class="col pv y" style="right:28px;top:87px;line-height:18px;text-align:right">742<br>2087<br>998<br>585<br>324</div>
<div class="col pn" style="left:1617px;top:179px;line-height:18px">买一<br>买二<br>买三<br>买四<br>买五</div>
<div class="col pv r" style="left:1717px;top:179px;line-height:18px">16.96<br>16.95<br>16.94<br>16.93<br>16.92</div>
<div class="col pv y" style="right:28px;top:179px;line-height:18px;text-align:right">1138<br>1339<br>110<br>62<br>111</div>

<div class="col pn" style="left:1617px;top:273px;line-height:19px">今开<br>最高<br>最低<br>现量<br>外盘</div>
<div class="col pv" style="right:177px;top:273px;line-height:19px;text-align:right"><b style="font-weight:normal;color:#0f0">15.75</b><br><b style="font-weight:normal;color:#f33">17.48</b><br><b style="font-weight:normal;color:#0f0">15.70</b><br><b style="font-weight:normal;color:#c0c">6312</b><br><b style="font-weight:normal;color:#f33">325755</b></div>
<div class="col pn" style="left:1757px;top:273px;line-height:19px">均价<br>量比<br>市值<br>总量<br>内盘</div>
<div class="col pv" style="right:28px;top:273px;line-height:19px;text-align:right"><b style="font-weight:normal;color:#f33">16.95</b><br><b style="font-weight:normal;color:#f33">2.09</b><br><b style="font-weight:normal;color:#c0c0c0">102.2亿</b><br><b style="font-weight:normal;color:#c0c0c0">681674</b><br><b style="font-weight:normal;color:#0f0">355919</b></div>
<div class="col pn" style="left:1617px;top:369px;line-height:19px">换手<br>净资<br>收益<small>(一)</small></div>
<div class="col pv w" style="right:177px;top:369px;line-height:19px;text-align:right">11.45%<br>5.86<br>0.005</div>
<div class="col pn" style="left:1757px;top:369px;line-height:19px">股本<br>流通<br><small style="font-size:14px">PE(动)</small></div>
<div class="col pv w" style="right:28px;top:369px;line-height:19px;text-align:right">6.02亿<br>5.95亿<br>2685.7</div>
<span class="pn" style="left:1616px;top:430px">交易状态: 闭市阶段</span><span class="pv w" style="left:1764px;top:430px">15:00:01</span>
<span class="pn" style="left:1617px;top:451px">主力净额</span><span class="pv r" style="left:1810px;top:451px;font-size:15px">1.68亿</span><span class="pv r" style="right:28px;top:451px;font-size:15px">15%</span>

<!-- ticks -->
<div class="col pv w" style="left:1616px;top:474px;line-height:18px">14:55<br><br><br><br><br><br>14:56<br><br><br><br><br><br><br><br><br><br><br><br><br><br><br><br><br><br><br><br>14:57<br>15:00</div>
<div class="col pv r" style="left:1717px;top:474px;line-height:18px">16.98<br>16.98<br>16.98<br>16.98<br>16.99<br>16.99<br>16.99<br>16.99<br>16.99<br>16.99<br>16.98<br>16.99<br>16.99<br>16.98<br>16.98<br>16.98<br>16.97<br>16.98<br>16.98<br>16.97<br>16.97<br>16.98<br>16.97<br>16.97<br>16.96<br>16.96<br>16.96<br>16.97</div>
<div class="col pv y" style="right:86px;top:474px;line-height:18px;text-align:right">134<br>49<br>202<br>218<br>71<br>127<br>201<br>95<br>84<br>118<br>188<br>320<br>175<br>98<br>439<br>177<br>51<br>208<br>321<br>106<br>322<br>329<br>209<br>119<br>85<br>289<br>30<br><b style="font-weight:normal;color:#c0c">6312</b></div>
<div class="col pv" style="left:1852px;top:474px;line-height:18px;color:#0f0">S<br>S<br>S<br>S<br><b style="font-weight:normal;color:#f33">B</b><br><b style="font-weight:normal;color:#f33">B</b><br><b style="font-weight:normal;color:#f33">B</b><br><b style="font-weight:normal;color:#f33">B</b><br><b style="font-weight:normal;color:#f33">B</b><br><b style="font-weight:normal;color:#f33">B</b><br>S<br><b style="font-weight:normal;color:#f33">B</b><br><b style="font-weight:normal;color:#f33">B</b><br>S<br>S<br><b style="font-weight:normal;color:#f33">B</b><br>S<br><b style="font-weight:normal;color:#f33">B</b><br><b style="font-weight:normal;color:#f33">B</b><br>S<br>S<br><b style="font-weight:normal;color:#f33">B</b><br>S<br><b style="font-weight:normal;color:#f33">B</b><br>S<br>S<br>S</div>
<div class="col pv" style="right:28px;top:474px;line-height:18px;text-align:right;color:#888">28<br>12<br>26<br>9<br>7<br>11<br>22<br>10<br>9<br>14<br>18<br>45<br>16<br>13<br>55<br>31<br>14<br>26<br>33<br>20<br>29<br>38<br>34<br>11<br>16<br>20<br>7<br>472</div>

<span class="tab" style="left:1614px;color:#4ff">笔</span><span class="tab" style="left:1645px">价</span><span class="tab" style="left:1676px">细</span><span class="tab" style="left:1707px">势</span><span class="tab" style="left:1738px">联</span><span class="tab" style="left:1769px">值</span><span class="tab" style="left:1800px">主</span><span class="tab" style="left:1831px">逆</span><span class="tab" style="left:1862px">筹</span>

<!-- sidebar text -->
<span class="sd" style="top:386px;font-weight:bold;font-size:10px;color:#2a40c0;line-height:20px">RSI</span><span class="sd" style="top:408px;font-weight:bold;font-size:15px;color:#c02020">$</span>
<span class="sd" style="top:531px">1</span><span class="sd" style="top:554px">5</span><span class="sd" style="top:577px">15</span><span class="sd" style="top:600px">30</span><span class="sd" style="top:623px">60</span><span class="sd" style="top:646px">日</span><span class="sd" style="top:670px">周</span><span class="sd" style="top:692px">月</span><span class="sd" style="top:715px">N</span><span class="sd" style="top:738px">多</span><span class="sd" style="top:761px">季</span><span class="sd" style="top:784px">年</span>
<span class="sd" style="top:486px;font-size:10px;color:#1a6fd4">Fs</span><span class="sd" style="top:233px;font-size:10px;color:#1a6fd4">F10</span><span class="sd" style="top:279px;font-size:10px;color:#1a6fd4">F12</span><span class="sd" style="top:302px;font-size:11px;color:#1a6fd4">f(x)</span>
</body></html>
